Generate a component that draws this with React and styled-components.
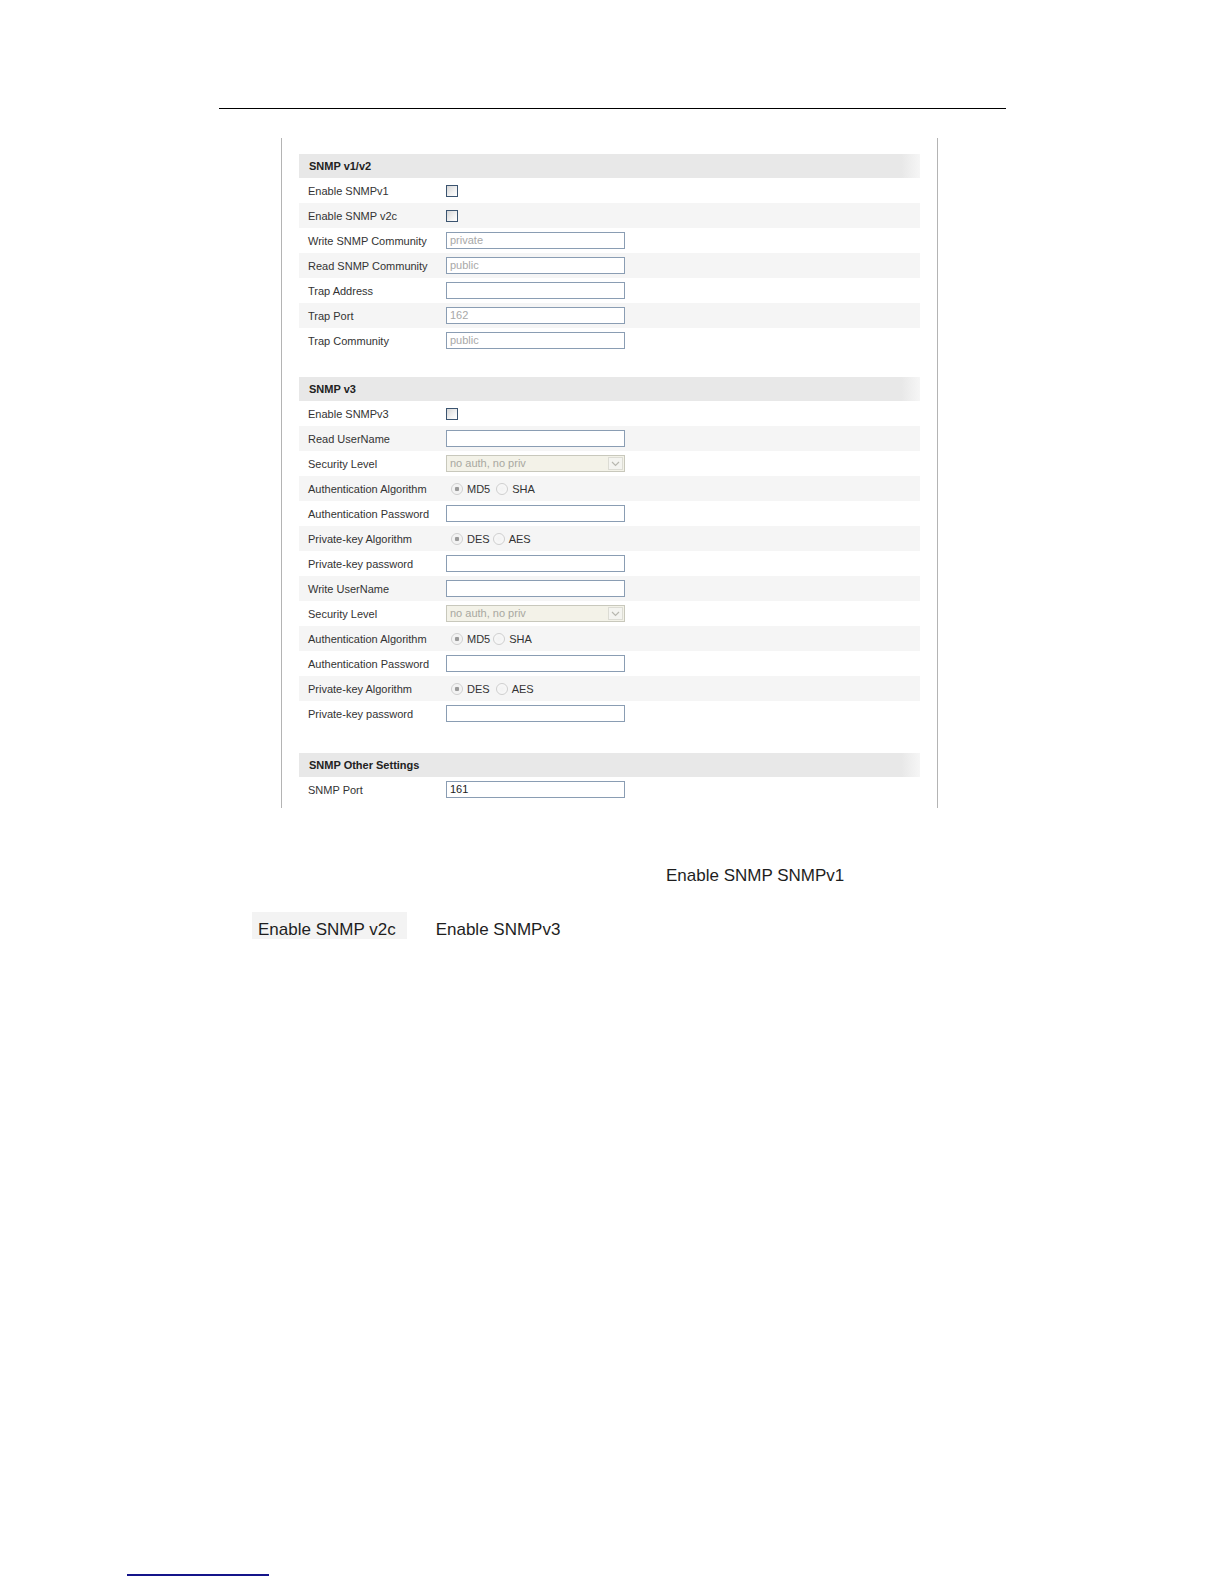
import React from 'react';
import styled, { createGlobalStyle } from 'styled-components';

const GlobalStyle = createGlobalStyle`
  html, body {
    margin: 0;
    padding: 0;
    background: #fff;
  }
  body {
    font-family: "Liberation Sans", Arial, sans-serif;
  }
`;

const Page = styled.div`
  width: 1224px;
  min-height: 1584px;
  display: flex;
  flex-direction: column;
  background: #fff;
  padding-top: 108px;
  box-sizing: border-box;
`;

const TopRule = styled.div`
  margin-left: 219px;
  width: 787px;
  height: 1px;
  border-top: 1.5px solid #000;
`;

const Panel = styled.div`
  margin-top: 28px;
  margin-left: 281px;
  width: 621px;
  padding: 16px 17px 6px 17px;
  border-left: 1px solid #b4b4b4;
  border-right: 1px solid #b4b4b4;
  font-size: 11px;
  color: #333;
`;

const Section = styled.div`
  margin-top: ${(p) => p.gap || 0}px;
`;

const Header = styled.div`
  height: 24px;
  line-height: 24px;
  padding-left: 10px;
  background: linear-gradient(90deg, #e8e8e8 97%, #f6f6f6 100%);
  font-weight: bold;
  color: #222;
`;

const Row = styled.div`
  display: grid;
  grid-template-columns: 147px 1fr;
  align-items: center;
  height: 25px;
  background: ${(p) => (p.striped ? '#f5f5f5' : '#fff')};
`;

const Label = styled.div`
  padding-left: 9px;
  white-space: nowrap;
`;

const Checkbox = styled.span`
  display: block;
  width: 10px;
  height: 10px;
  border: 1px solid #3b5470;
  background: linear-gradient(135deg, #d6d6d6 0%, #f2f2f2 60%, #ffffff 100%);
`;

const TextBox = styled.div`
  width: 174px;
  height: 15px;
  line-height: 15px;
  padding-left: 3px;
  border: 1px solid #8a9db3;
  background: #fff;
  color: ${(p) => (p.dim ? '#a8a8a8' : '#222')};
`;

const SelectBox = styled.div`
  position: relative;
  width: 174px;
  height: 15px;
  line-height: 15px;
  padding-left: 3px;
  border: 1px solid #c8c8bc;
  background: #f3f2e8;
  color: #a8a8a0;
`;

const SelectArrow = styled.span`
  position: absolute;
  right: 1px;
  top: 1px;
  width: 13px;
  height: 11px;
  border: 1px solid #dcdcd4;
  background: #f4f4f0;
  display: flex;
  align-items: center;
  justify-content: center;
`;

const RadioGroup = styled.div`
  display: flex;
  align-items: center;
  padding-left: 5px;
`;

const Radio = styled.span`
  width: 10px;
  height: 10px;
  border-radius: 50%;
  border: 1px solid #cfcfcf;
  background: radial-gradient(circle, ${(p) => (p.checked ? '#9a9a9a 0, #9a9a9a 2px, #f0f0f0 2.5px' : '#f2f2f2 0')}, #fafafa 100%);
  margin-right: 4px;
  flex: none;
`;

const RadioText = styled.span`
  margin-right: ${(p) => p.space || 0}px;
`;

const Notes = styled.div`
  margin-top: 58px;
  font-size: 17px;
  color: #1e1e1e;
`;

const NoteLine = styled.div`
  display: flex;
  align-items: center;
  padding-left: ${(p) => p.indent}px;
  margin-top: ${(p) => p.gap || 0}px;
  height: ${(p) => p.h || 20}px;
`;

const NoteChip = styled.span`
  display: inline-flex;
  align-items: flex-end;
  height: 27px;
  padding: 0 11px 0 6px;
  background: ${(p) => (p.shaded ? '#f3f3f3' : 'transparent')};
  margin-right: ${(p) => p.space || 0}px;
  line-height: 16px;
  padding-bottom: 1px;
  box-sizing: border-box;
`;

const FooterRule = styled.div`
  margin-top: auto;
  margin-left: 127px;
  width: 142px;
  height: 2px;
  background: #14148a;
  margin-bottom: 8px;
`;

function Arrow() {
  return (
    <svg width="9" height="6" viewBox="0 0 9 6">
      <path d="M1 1 L4.5 4.5 L8 1" fill="none" stroke="#b8b8b0" strokeWidth="1.2" />
    </svg>
  );
}

function Control({ item }) {
  if (item.type === 'check') return <Checkbox />;
  if (item.type === 'text') return <TextBox dim={item.dim}>{item.value}</TextBox>;
  if (item.type === 'select')
    return (
      <SelectBox>
        {item.value}
        <SelectArrow>
          <Arrow />
        </SelectArrow>
      </SelectBox>
    );
  if (item.type === 'radio')
    return (
      <RadioGroup>
        <Radio checked />
        <RadioText space={item.tight ? 3 : 6}>{item.options[0]}</RadioText>
        <Radio />
        <RadioText>{item.options[1]}</RadioText>
      </RadioGroup>
    );
  return null;
}

const sections = [
  {
    title: 'SNMP v1/v2',
    gap: 0,
    rows: [
      { label: 'Enable SNMPv1', type: 'check' },
      { label: 'Enable SNMP v2c', type: 'check' },
      { label: 'Write SNMP Community', type: 'text', value: 'private', dim: true },
      { label: 'Read SNMP Community', type: 'text', value: 'public', dim: true },
      { label: 'Trap Address', type: 'text', value: '' },
      { label: 'Trap Port', type: 'text', value: '162', dim: true },
      { label: 'Trap Community', type: 'text', value: 'public', dim: true },
    ],
  },
  {
    title: 'SNMP v3',
    gap: 24,
    rows: [
      { label: 'Enable SNMPv3', type: 'check' },
      { label: 'Read UserName', type: 'text', value: '' },
      { label: 'Security Level', type: 'select', value: 'no auth, no priv' },
      { label: 'Authentication Algorithm', type: 'radio', options: ['MD5', 'SHA'] },
      { label: 'Authentication Password', type: 'text', value: '' },
      { label: 'Private-key Algorithm', type: 'radio', options: ['DES', 'AES'], tight: true },
      { label: 'Private-key password', type: 'text', value: '' },
      { label: 'Write UserName', type: 'text', value: '' },
      { label: 'Security Level', type: 'select', value: 'no auth, no priv' },
      { label: 'Authentication Algorithm', type: 'radio', options: ['MD5', 'SHA'], tight: true },
      { label: 'Authentication Password', type: 'text', value: '' },
      { label: 'Private-key Algorithm', type: 'radio', options: ['DES', 'AES'] },
      { label: 'Private-key password', type: 'text', value: '' },
    ],
  },
  {
    title: 'SNMP Other Settings',
    gap: 27,
    rows: [{ label: 'SNMP Port', type: 'text', value: '161' }],
  },
];

export default function App() {
  return (
    <Page>
      <GlobalStyle />
      <TopRule />
      <Panel>
        {sections.map((s) => (
          <Section key={s.title} gap={s.gap}>
            <Header>{s.title}</Header>
            {s.rows.map((r, i) => (
              <Row key={i} striped={i % 2 === 1}>
                <Label>{r.label}</Label>
                <div>
                  <Control item={r} />
                </div>
              </Row>
            ))}
          </Section>
        ))}
      </Panel>
      <Notes>
        <NoteLine indent={666}>Enable SNMP SNMPv1</NoteLine>
        <NoteLine indent={252} gap={26} h={27}>
          <NoteChip shaded space={23}>Enable SNMP v2c</NoteChip>
          <NoteChip>Enable SNMPv3</NoteChip>
        </NoteLine>
      </Notes>
      <FooterRule />
    </Page>
  );
}
